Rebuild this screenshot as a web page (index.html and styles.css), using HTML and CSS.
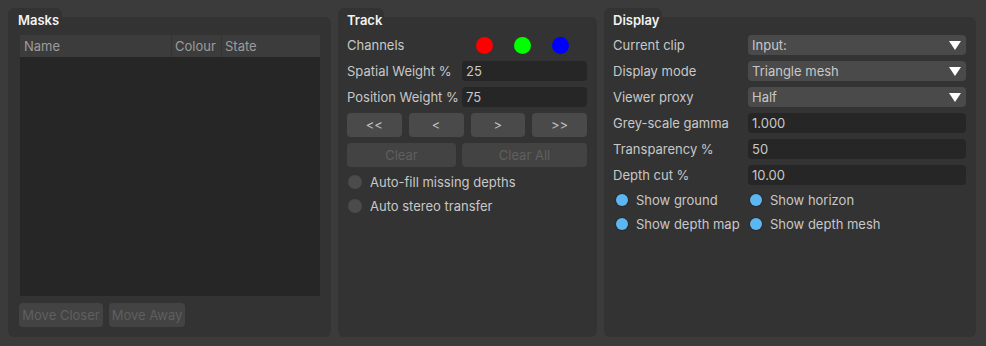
FILE: index.html
```html
<!DOCTYPE html>
<html>
<head>
<meta charset="utf-8">
<link rel="stylesheet" href="styles.css">
</head>
<body>
<div class="app">
  <section class="panel masks">
    <div class="tab tab-masks">Masks</div>
    <div class="body">
      <div class="table">
        <div class="thead">
          <div class="th c-name">Name</div>
          <div class="th c-colour">Colour</div>
          <div class="th c-state">State</div>
        </div>
      </div>
      <div class="btn-row">
        <button class="btn disabled w-closer">Move Closer</button>
        <button class="btn disabled w-away">Move Away</button>
      </div>
    </div>
  </section>

  <section class="panel track">
    <div class="tab tab-track">Track</div>
    <div class="body">
      <div class="row">
        <div class="label">Channels</div>
        <div class="dots">
          <span class="dot red"></span>
          <span class="dot green"></span>
          <span class="dot blue"></span>
        </div>
      </div>
      <div class="row">
        <div class="label">Spatial Weight %</div>
        <div class="field input">25</div>
      </div>
      <div class="row">
        <div class="label">Position Weight %</div>
        <div class="field input">75</div>
      </div>
      <div class="nav-row">
        <button class="btn">&lt;&lt;</button>
        <button class="btn">&lt;</button>
        <button class="btn">&gt;</button>
        <button class="btn">&gt;&gt;</button>
      </div>
      <div class="clear-row">
        <button class="btn disabled">Clear</button>
        <button class="btn disabled">Clear All</button>
      </div>
      <div class="radio-row first"><span class="radio"></span>Auto-fill missing depths</div>
      <div class="radio-row"><span class="radio"></span>Auto stereo transfer</div>
    </div>
  </section>

  <section class="panel display">
    <div class="tab tab-display">Display</div>
    <div class="body">
      <div class="drow">
        <div class="label">Current clip</div>
        <div class="field combo">Input:<span class="arrow"></span></div>
      </div>
      <div class="drow">
        <div class="label">Display mode</div>
        <div class="field combo">Triangle mesh<span class="arrow"></span></div>
      </div>
      <div class="drow">
        <div class="label">Viewer proxy</div>
        <div class="field combo">Half<span class="arrow"></span></div>
      </div>
      <div class="drow">
        <div class="label">Grey-scale gamma</div>
        <div class="field input">1.000</div>
      </div>
      <div class="drow">
        <div class="label">Transparency %</div>
        <div class="field input">50</div>
      </div>
      <div class="drow">
        <div class="label">Depth cut %</div>
        <div class="field input">10.00</div>
      </div>
      <div class="checks">
        <div class="check"><span class="bdot"></span>Show ground</div>
        <div class="check"><span class="bdot"></span>Show horizon</div>
        <div class="check"><span class="bdot"></span>Show depth map</div>
        <div class="check"><span class="bdot"></span>Show depth mesh</div>
      </div>
    </div>
  </section>
</div>
</body>
</html>
```

FILE: styles.css
```css
html, body {
  margin: 0;
  padding: 0;
  background: #3b3b3b;
  width: 986px;
  height: 346px;
  overflow: hidden;
}

body {
  font-family: Inter, "Liberation Sans", sans-serif;
  font-size: 13px;
  color: #c8c8c8;
}

.app {
  display: flex;
  gap: 7px;
  padding: 8px 0 0 8px;
}

.panel {
  display: block;
}

.masks { width: 323px; }
.track { width: 259px; }
.display { width: 372px; }

.tab {
  height: 9px;
  background: #333333;
  border-radius: 6px 6px 0 0;
  padding-left: 10px;
  line-height: 24px;
  color: #f2f2f2;
  font-weight: 600;
  white-space: nowrap;
}
.tab-masks { width: 44px; }
.tab-track { width: 37px; padding-left: 9px; }
.tab-display { width: 49px; padding-left: 9px; }

.body {
  height: 320px;
  box-sizing: border-box;
  background: #333333;
  border-radius: 0 6px 6px 6px;
}

/* Masks */
.masks .body {
  padding: 18px 11px 0 12px;
}

.table {
  height: 261px;
  background: #262626;
}

.thead {
  display: flex;
  height: 22px;
  background: #3c3c3c;
  color: #9c9c9c;
  line-height: 22px;
}

.th {
  padding-left: 4px;
  box-sizing: border-box;
}
.c-name { width: 151px; }
.c-colour { width: 50px; border-left: 1px solid #343434; padding-left: 3px; }
.c-state { flex: 1; border-left: 1px solid #343434; padding-left: 3px; }

.btn-row {
  display: flex;
  gap: 6px;
  margin-top: 7px;
  margin-left: -1px;
}

.btn {
  font: inherit;
  height: 24px;
  border: none;
  border-radius: 4px;
  background: #4a4a4a;
  color: #c4c4c4;
  padding: 0;
  margin: 0;
}
.btn.disabled {
  background: #434343;
  color: #5f5f5f;
}
.w-closer { width: 84px; }
.w-away { width: 76px; }

/* Track */
.track .body {
  padding: 18px 10px 0 9px;
}

.row {
  display: grid;
  grid-template-columns: 115px 125px;
  height: 20px;
  align-items: center;
  margin-bottom: 6px;
}

.label {
  white-space: nowrap;
}

.field {
  height: 20px;
  line-height: 20px;
  box-sizing: border-box;
  border-radius: 4px;
  white-space: nowrap;
}

.input {
  background: #262626;
  padding-left: 4px;
}

.dots {
  display: flex;
  gap: 21px;
  padding-left: 14px;
  align-items: center;
}
.dot {
  width: 17px;
  height: 17px;
  border-radius: 50%;
  display: block;
}
.red { background: #ff0000; }
.green { background: #00ff00; }
.blue { background: #0000ff; }

.nav-row {
  display: grid;
  grid-template-columns: repeat(4, 1fr);
  gap: 7px;
}

.clear-row {
  display: grid;
  grid-template-columns: 109px 125px;
  gap: 6px;
  margin-top: 6px;
}
.clear-row .btn { height: 24px; }

.radio-row {
  display: flex;
  align-items: center;
  height: 18px;
  white-space: nowrap;
}
.radio-row.first { margin-top: 6px; }
.radio-row + .radio-row { margin-top: 6px; }

.radio {
  width: 14px;
  height: 14px;
  border-radius: 50%;
  background: #4b4b4b;
  margin-left: 1px;
  margin-right: 8px;
  display: block;
}

/* Display */
.display .body {
  padding: 18px 10px 0 9px;
}

.drow {
  display: grid;
  grid-template-columns: 135px 218px;
  height: 20px;
  align-items: center;
  margin-bottom: 6px;
}

.combo {
  background: #4a4a4a;
  padding-left: 4px;
  position: relative;
}

.arrow {
  position: absolute;
  right: 5px;
  top: 6px;
  width: 0;
  height: 0;
  border-left: 6px solid transparent;
  border-right: 6px solid transparent;
  border-top: 9px solid #ffffff;
}

.checks {
  display: grid;
  grid-template-columns: 134px 150px;
  row-gap: 6px;
  margin-top: 2px;
}

.check {
  display: flex;
  align-items: center;
  height: 18px;
  white-space: nowrap;
}

.bdot {
  width: 12px;
  height: 12px;
  border-radius: 50%;
  background: #5cb6f2;
  box-shadow: 0 0 0 1px #2b2b2b;
  margin-left: 3px;
  margin-right: 8px;
  display: block;
}
```
